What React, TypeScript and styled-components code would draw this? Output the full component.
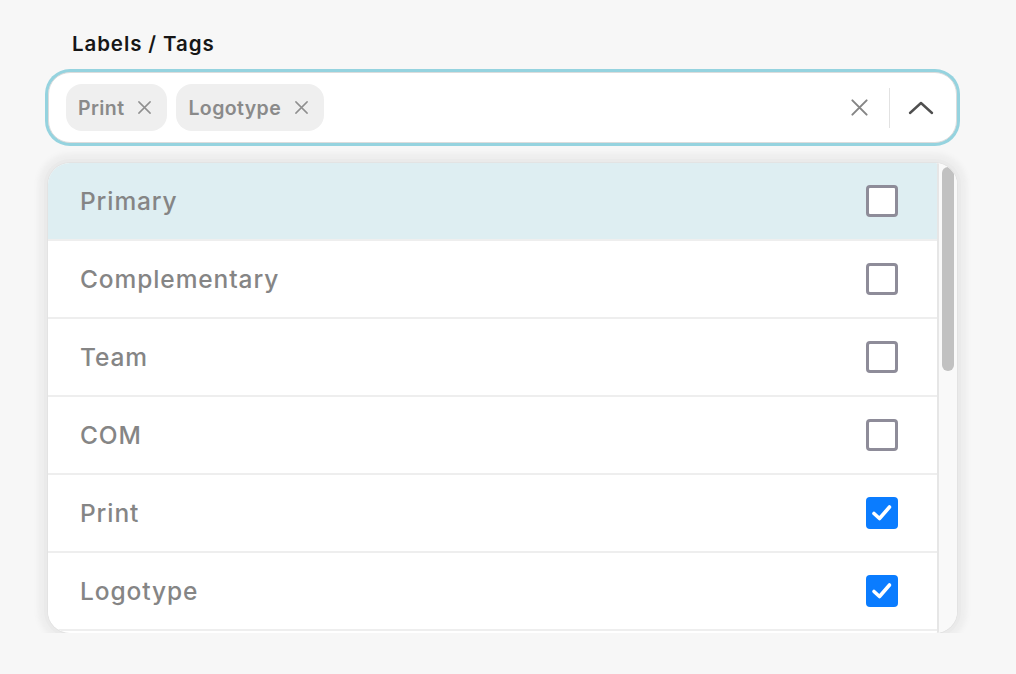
import React from "react";
import styled, { createGlobalStyle } from "styled-components";

const GlobalStyle = createGlobalStyle`
  html, body {
    margin: 0;
    padding: 0;
    background: #f7f7f7;
    font-family: Inter, "Noto Sans", sans-serif;
  }
`;

const Page = styled.div`
  padding: 29px 59px 0 48px;
  width: 909px;
`;

const Label = styled.div`
  padding-left: 24px;
  font-size: 20.5px;
  font-weight: 600;
  color: #161616;
  letter-spacing: 0.9px;
  line-height: 30px;
  margin-bottom: 13px;
`;

const Control = styled.div`
  display: flex;
  align-items: center;
  height: 71px;
  box-sizing: border-box;
  background: #fff;
  border: 1px solid #dcdcdc;
  border-radius: 22px;
  box-shadow: 0 0 0 3px #95d3df;
  padding: 0 20px 0 17px;
`;

const Chips = styled.div`
  display: flex;
  gap: 9px;
  flex: 1;
`;

const Chip = styled.span`
  display: inline-flex;
  align-items: center;
  gap: 13px;
  height: 47px;
  padding: 0 15px 0 12px;
  background: #efefef;
  border-radius: 16px;
  font-size: 19.5px;
  font-weight: 600;
  letter-spacing: 0.4px;
  color: #8a8a8a;
`;

const Indicators = styled.div`
  display: flex;
  align-items: center;
`;

const IconButton = styled.span`
  display: flex;
  align-items: center;
  justify-content: center;
  width: 30px;
  height: 30px;
`;

const Separator = styled.span`
  width: 1px;
  height: 40px;
  background: #e2e2e2;
  margin: 0 16px 0 15px;
`;

const Menu = styled.div`
  display: flex;
  margin-top: 20px;
  height: 470px;
  background: #fff;
  border-radius: 22px;
  overflow: hidden;
  box-shadow: 0 0 0 1px #e3e3e3, 0 0 0 4px #eaeaea, 0 0 5px 10px #eeeeee;
`;

const MenuList = styled.div`
  flex: 1;
  overflow: hidden;
`;

const ScrollTrack = styled.div`
  width: 20px;
  border-left: 2px solid #e6e6e6;
  background: #f9f9f9;
  padding: 4px 3px 0 3px;
  box-sizing: border-box;
  flex-shrink: 0;
`;

const ScrollThumb = styled.div`
  height: 204px;
  border-radius: 6px;
  background: #c1c1c1;
`;

const Option = styled.div<{ $active?: boolean }>`
  display: flex;
  align-items: center;
  justify-content: space-between;
  height: 76px;
  padding: 0 39px 0 32px;
  background: ${(p) => (p.$active ? "#deeef2" : "#fff")};
  border-bottom: 2px solid #eeeeee;
  font-size: 24.5px;
  font-weight: 500;
  letter-spacing: 0.9px;
  color: #858585;
`;

const Box = styled.span<{ $checked?: boolean }>`
  display: flex;
  align-items: center;
  justify-content: center;
  width: 32px;
  height: 32px;
  box-sizing: border-box;
  border-radius: 4px;
  border: ${(p) => (p.$checked ? "none" : "3px solid #8e8c99")};
  background: ${(p) => (p.$checked ? "#0a7cff" : "#fff")};
`;

const options = [
  { name: "Primary", checked: false },
  { name: "Complementary", checked: false },
  { name: "Team", checked: false },
  { name: "COM", checked: false },
  { name: "Print", checked: true },
  { name: "Logotype", checked: true },
];

const Cross = ({ size, color, width }: { size: number; color: string; width: number }) => (
  <svg width={size} height={size} viewBox="0 0 16 16" fill="none">
    <path d="M2 2L14 14M14 2L2 14" stroke={color} strokeWidth={width} strokeLinecap="round" />
  </svg>
);

export default function App() {
  return (
    <>
      <GlobalStyle />
      <Page>
        <Label>Labels / Tags</Label>
        <Control>
          <Chips>
            <Chip>
              Print
              <Cross size={15} color="#8f8f8f" width={1.6} />
            </Chip>
            <Chip>
              Logotype
              <Cross size={15} color="#8f8f8f" width={1.6} />
            </Chip>
          </Chips>
          <Indicators>
            <IconButton>
              <Cross size={19} color="#858585" width={1.7} />
            </IconButton>
            <Separator />
            <IconButton>
              <svg width="26" height="16" viewBox="0 0 26 16" fill="none">
                <path d="M2 13L13 3L24 13" stroke="#4f4f4f" strokeWidth="2.4" strokeLinecap="round" strokeLinejoin="round" />
              </svg>
            </IconButton>
          </Indicators>
        </Control>
        <Menu>
          <MenuList>
            {options.map((o, i) => (
              <Option key={o.name} $active={i === 0}>
                {o.name}
                <Box $checked={o.checked}>
                  {o.checked && (
                    <svg width="26" height="26" viewBox="0 0 26 26" fill="none">
                      <path d="M5 13.5L10.5 18.5L20.5 7" stroke="#fff" strokeWidth="3.6" strokeLinecap="round" strokeLinejoin="round" />
                    </svg>
                  )}
                </Box>
              </Option>
            ))}
          </MenuList>
          <ScrollTrack>
            <ScrollThumb />
          </ScrollTrack>
        </Menu>
      </Page>
    </>
  );
}
